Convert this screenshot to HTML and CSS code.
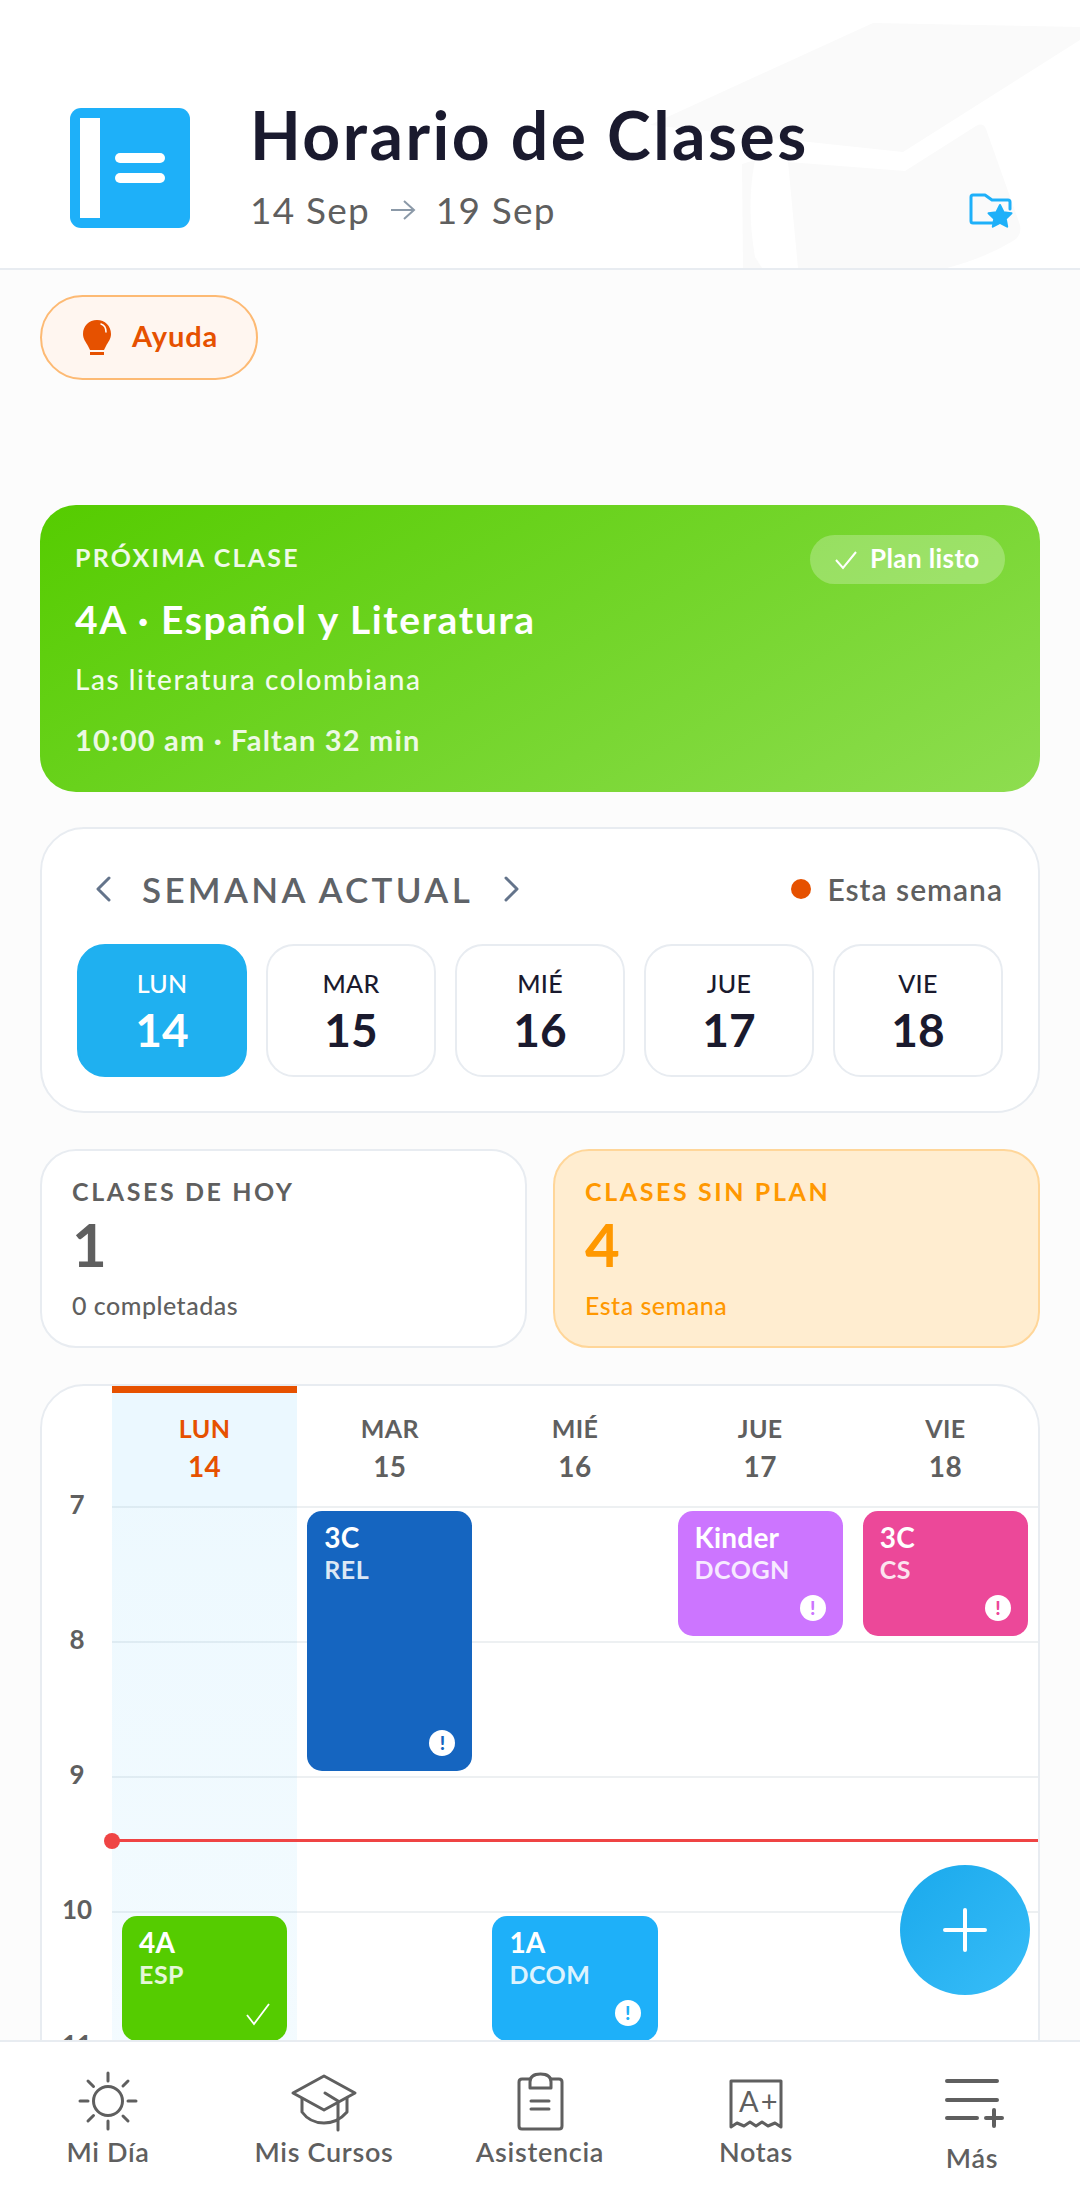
FILE: index.html
```html
<!DOCTYPE html>
<html lang="es">
<head>
<meta charset="utf-8">
<title>Horario de Clases</title>
<link rel="stylesheet" href="styles.css">
</head>
<body>
<div class="app">
  <header class="top">
    <svg class="top-art" viewBox="0 0 1080 268" aria-hidden="true">
      <path d="M650 125 L873 23 L1080 27 L1080 40 L903 152 Z"/>
      <path d="M788 162 L905 171 L976 126 Q983 122 986 129 L1020 225 Q1022 236 1013 241 Q985 258 947 268 L798 268 Z"/>
      <path d="M742 164 L755 160 Q746 205 755 257 L762 268 L743 268 Z"/>
    </svg>
    <svg class="logo" viewBox="0 0 120 120" aria-hidden="true">
      <rect width="120" height="120" rx="11" fill="#1eb0f9"/>
      <rect x="10" y="10" width="20" height="100" fill="#fff"/>
      <rect x="45" y="45" width="50" height="10" rx="5" fill="#fff"/>
      <rect x="45" y="65" width="50" height="10" rx="5" fill="#fff"/>
    </svg>
    <div class="top-text">
      <h1 class="title">Horario de Clases</h1>
      <div class="range">
        <span>14 Sep</span>
        <svg class="range-arrow" viewBox="0 0 28 24" aria-hidden="true"><path d="M2 12H25M15 3l10 9-10 9"/></svg>
        <span>19 Sep</span>
      </div>
    </div>
    <svg class="folder" viewBox="0 0 44 36" aria-hidden="true">
      <path class="folder-line" d="M24 30H4Q2 30 2 28V4Q2 2 4 2H16L23 7H39Q41 7 41 9V16"/>
      <path class="folder-star" d="M31 12l3.6 7.2 7.9 1.1-5.7 5.5 1.4 7.9-7.2-3.8-7.2 3.8 1.4-7.9-5.7-5.5 7.9-1.1z"/>
    </svg>
  </header>

  <main class="content">
    <button class="help">
      <svg class="help-icon" viewBox="0 0 28 36" aria-hidden="true">
        <path d="M14 0C6 0 0 6 0 14c0 5 3 8 5 12l2 4h14l2-4c2-4 5-7 5-12C28 6 22 0 14 0z" fill="#e65100"/>
        <path d="M18 4c3 1 5 4 5 8" fill="none" stroke="#fff" stroke-width="1.5" stroke-linecap="round"/>
        <rect x="7" y="32" width="14" height="3" fill="#e65100"/>
      </svg>
      <span>Ayuda</span>
    </button>

    <section class="next">
      <div class="next-head">
        <div class="next-kicker">PRÓXIMA CLASE</div>
        <div class="plan-chip">
          <svg class="plan-check" viewBox="0 0 24 20" aria-hidden="true"><path d="M2 10l7 8L22 2"/></svg>
          <span class="plan-text">Plan listo</span>
        </div>
      </div>
      <div class="next-name">4A · Español y Literatura</div>
      <div class="next-topic">Las literatura colombiana</div>
      <div class="next-time">10:00 am · Faltan 32 min</div>
    </section>

    <section class="week">
      <div class="week-head">
        <svg class="chev" viewBox="0 0 18 26" aria-hidden="true"><path d="M15 2L4 13l11 11"/></svg>
        <div class="week-name">SEMANA ACTUAL</div>
        <svg class="chev" viewBox="0 0 18 26" aria-hidden="true"><path d="M3 2l11 11L3 24"/></svg>
        <div class="week-now"><i class="dot"></i>Esta semana</div>
      </div>
      <div class="days">
        <div class="day day-on"><span class="day-n">LUN</span><b class="day-d">14</b></div>
        <div class="day"><span class="day-n">MAR</span><b class="day-d">15</b></div>
        <div class="day"><span class="day-n">MIÉ</span><b class="day-d">16</b></div>
        <div class="day"><span class="day-n">JUE</span><b class="day-d">17</b></div>
        <div class="day"><span class="day-n">VIE</span><b class="day-d">18</b></div>
      </div>
    </section>

    <section class="stats">
      <div class="stat">
        <div class="stat-k">CLASES DE HOY</div>
        <div class="stat-v">1</div>
        <div class="stat-s">0 completadas</div>
      </div>
      <div class="stat stat-warn">
        <div class="stat-k">CLASES SIN PLAN</div>
        <div class="stat-v">4</div>
        <div class="stat-s">Esta semana</div>
      </div>
    </section>

    <section class="cal">
      <div class="cal-head">
        <div class="cal-gut"></div>
        <div class="cal-day cal-today"><span>LUN</span><span class="cal-num">14</span></div>
        <div class="cal-day"><span>MAR</span><span class="cal-num">15</span></div>
        <div class="cal-day"><span>MIÉ</span><span class="cal-num">16</span></div>
        <div class="cal-day"><span>JUE</span><span class="cal-num">17</span></div>
        <div class="cal-day"><span>VIE</span><span class="cal-num">18</span></div>
      </div>
      <div class="cal-body">
        <div class="hours">
          <div class="hour">7</div>
          <div class="hour">8</div>
          <div class="hour">9</div>
          <div class="hour">10</div>
          <div class="hour">11</div>
        </div>
        <div class="grid">
          <div class="col col-today">
            <div class="ev ev-green" style="top:410px;height:125px"><b>4A</b><span>ESP</span>
              <svg class="ev-ok" viewBox="0 0 26 24" aria-hidden="true"><path d="M2 13l7 9L24 2"/></svg>
            </div>
          </div>
          <div class="col">
            <div class="ev ev-navy" style="top:5px;height:260px"><b>3C</b><span>REL</span><i class="ev-alert">!</i></div>
          </div>
          <div class="col">
            <div class="ev ev-sky" style="top:410px;height:125px"><b>1A</b><span>DCOM</span><i class="ev-alert">!</i></div>
          </div>
          <div class="col">
            <div class="ev ev-purple" style="top:5px;height:125px"><b>Kinder</b><span>DCOGN</span><i class="ev-alert">!</i></div>
          </div>
          <div class="col">
            <div class="ev ev-pink" style="top:5px;height:125px"><b>3C</b><span>CS</span><i class="ev-alert">!</i></div>
          </div>
          <div class="now"></div>
        </div>
      </div>
    </section>
  </main>

  <button class="fab" aria-label="Agregar">
    <svg viewBox="0 0 44 44" aria-hidden="true"><path d="M22 2V42M2 22H42"/></svg>
  </button>

  <nav class="nav">
    <div class="nav-item">
      <svg class="nav-icon" viewBox="0 0 70 70" aria-hidden="true">
        <circle cx="35" cy="35" r="14.5"/>
        <path d="M35 7v8M35 55v8M7 35h8M55 35h8M15 15l5.500 5.500M50 50l5 5M15 55l5.500-5.500M50 20l5-5"/>
      </svg>
      <span>Mi Día</span>
    </div>
    <div class="nav-item">
      <svg class="nav-icon" viewBox="0 0 70 70" aria-hidden="true">
        <path d="M35 10L66 27 35 44 4 27Z"/>
        <path d="M13 33V46C18 53 26 57 35 57S52 53 58 46V32"/>
        <path d="M36 27L49 35V64"/>
      </svg>
      <span>Mis Cursos</span>
    </div>
    <div class="nav-item">
      <svg class="nav-icon" viewBox="0 0 70 70" aria-hidden="true">
        <path d="M25 13H17Q14 13 14 16V60Q14 63 17 63H54Q57 63 57 60V16Q57 13 54 13H46"/>
        <path d="M25 22V16Q25 8 35.500 8T46 16V22Z"/>
        <path d="M26 35H44M26 43H44"/>
      </svg>
      <span>Asistencia</span>
    </div>
    <div class="nav-item">
      <svg class="nav-icon" viewBox="0 0 70 70" aria-hidden="true">
        <path d="M10 61V15H60V61L54 57 47 60 41 56 35 60 29 56 23 60 16 57Z"/>
        <text class="nav-grade" x="18" y="46">A+</text>
      </svg>
      <span>Notas</span>
    </div>
    <div class="nav-item nav-more">
      <svg class="nav-icon" viewBox="0 0 70 70" aria-hidden="true">
        <path d="M10 15H60M10 34H60M10 52H40M57 44V60M49 52H65"/>
      </svg>
      <span>Más</span>
    </div>
  </nav>
</div>
</body>
</html>
```

FILE: styles.css
```css
* { box-sizing: border-box; }
html, body { margin: 0; padding: 0; }
body { font-family: "Lato", "Noto Sans", sans-serif; color: #1a1a2e; background: #fcfcfc; }
.app { position: relative; width: 1080px; height: 2211px; display: flex; flex-direction: column; overflow: hidden; }

/* Header */
.top { position: relative; flex: none; height: 270px; background: #fff; border-bottom: 2px solid #e8ecf1; display: flex; padding: 108px 67px 0 70px; }
.top-art { position: absolute; left: 0; top: 0; width: 1080px; height: 268px; }
.top-art path { fill: #fafafa; }
.logo { position: relative; flex: none; width: 120px; height: 120px; margin-right: 60px; }
.top-text { position: relative; flex: 1; }
.title { margin: 0; font-size: 66px; line-height: 66px; font-weight: 700; letter-spacing: 2.5px; color: #1a1a2e; position: relative; top: -6px; }
.range { display: flex; align-items: center; gap: 19px; margin-top: 14px; font-size: 37px; line-height: 44px; color: #5f5f5f; letter-spacing: 1.2px; }
.range-arrow { width: 28px; height: 24px; fill: none; stroke: #8b99a8; stroke-width: 2; }
.folder { position: relative; flex: none; width: 44px; height: 36px; margin-top: 85px; }
.folder-line { fill: none; stroke: #1eb0f9; stroke-width: 3; stroke-linecap: round; stroke-linejoin: round; }
.folder-star { fill: #1eb0f9; stroke: #1eb0f9; stroke-width: 2; stroke-linejoin: round; }

/* Content */
.content { flex: 1; min-height: 0; overflow: hidden; padding: 25px 40px 0; display: flex; flex-direction: column; }
.help { flex: none; align-self: flex-start; width: 218px; height: 85px; border-radius: 43px; border: 2px solid #fdba74; background: #fff6f0; display: flex; align-items: center; padding: 0 0 4px 41px; gap: 21px; font: 700 29px "Lato", sans-serif; letter-spacing: 0.9px; color: #e65100; }
.help-icon { width: 28px; height: 36px; flex: none; margin-top: 4px; }

.next { flex: none; margin-top: 125px; height: 287px; border-radius: 36px; padding: 30px 35px 0; color: #fff; background: linear-gradient(150deg, #55cc00 0%, #8edd50 100%); }
.next-head { display: flex; justify-content: space-between; align-items: flex-start; }
.next-kicker { font-size: 25px; line-height: 30px; font-weight: 700; letter-spacing: 2.2px; margin-top: 7px; opacity: .9; }
.plan-chip { width: 195px; height: 49px; border-radius: 25px; background: rgba(255,255,255,.25); display: flex; align-items: center; padding-left: 24px; gap: 12px; font-size: 26px; font-weight: 700; letter-spacing: 0.4px; }
.plan-text { position: relative; top: -2px; }
.plan-check { width: 24px; height: 20px; fill: none; stroke: #fff; stroke-width: 2; }
.next-name { font-size: 39px; line-height: 48px; font-weight: 700; letter-spacing: 1.6px; margin-top: 11px; }
.next-topic { font-size: 28px; line-height: 34px; font-weight: 500; margin-top: 19px; letter-spacing: 1.55px; opacity: .92; }
.next-time { font-size: 29px; line-height: 34px; font-weight: 700; margin-top: 27px; letter-spacing: 1.2px; opacity: .88; }

.week { flex: none; margin-top: 35px; height: 286px; background: #fff; border: 2px solid #e8ecf1; border-radius: 44px; padding: 0 35px; }
.week-head { display: flex; align-items: center; height: 115px; padding-top: 4px; }
.chev { width: 18px; height: 26px; fill: none; stroke: #64748b; stroke-width: 3; stroke-linecap: round; stroke-linejoin: round; margin-left: 17px; }
.week-name { font-size: 35px; font-weight: 600; letter-spacing: 3.3px; color: #5f6368; margin: 0 30px 0 30px; }
.week-name + .chev { margin-left: 0; }
.week-now { margin-left: auto; display: flex; align-items: center; gap: 16px; font-size: 30px; font-weight: 600; color: #5f5f5f; letter-spacing: 1px; }
.dot { width: 20px; height: 20px; border-radius: 50%; background: #e65100; }
.days { display: grid; grid-template-columns: repeat(5, 170px); justify-content: space-between; }
.day { height: 133px; border: 2px solid #e8ecf1; border-radius: 28px; background: #fff; display: flex; flex-direction: column; align-items: center; padding-top: 21px; color: #1a1a2e; }
.day-on { background: #1fb0f0; border-color: #1fb0f0; color: #fff; }
.day-n { font-size: 25px; line-height: 32px; font-weight: 500; letter-spacing: 0.3px; }
.day-d { font-size: 46px; line-height: 56px; font-weight: 700; margin-top: 3px; }

.stats { flex: none; margin-top: 36px; display: grid; grid-template-columns: 487px 487px; column-gap: 26px; }
.stat { height: 199px; background: #fff; border: 2px solid #e8ecf1; border-radius: 36px; padding: 25px 30px 0; color: #5f5f5f; }
.stat-warn { background: #ffedd0; border-color: #ffd699; color: #ff9800; }
.stat-k { font-size: 25px; line-height: 30px; font-weight: 700; letter-spacing: 2.6px; }
.stat-v { font-size: 60px; line-height: 66px; font-weight: 700; margin-top: 5px; }
.stat-s { font-size: 25px; line-height: 30px; font-weight: 500; margin-top: 13px; letter-spacing: 0.5px; }

/* Calendar */
.cal { flex: none; margin-top: 36px; height: 1000px; background: #fff; border: 2px solid #e8ecf1; border-radius: 44px 44px 0 0; overflow: hidden; }
.cal-head { display: grid; grid-template-columns: 70px repeat(5, 1fr); height: 120px; }
.cal-day { display: flex; flex-direction: column; align-items: center; padding-top: 27px; font-size: 25px; line-height: 30px; font-weight: 700; color: #5f5f5f; gap: 8px; letter-spacing: 0.4px; }
.cal-num { font-size: 28px; }
.cal-today { background: #ebf8ff; border-top: 7px solid #e65100; padding-top: 20px; color: #e65100; }
.cal-body { display: flex; }
.hours { flex: none; width: 70px; margin-top: -16px; }
.hour { height: 135px; font-size: 26px; line-height: 28px; font-weight: 700; color: #5f5f5f; text-align: center; }
.grid { position: relative; flex: 1; height: 810px; display: grid; grid-template-columns: repeat(5, 1fr); background: repeating-linear-gradient(to bottom, #edf0f2 0, #edf0f2 2px, transparent 2px, transparent 135px); }
.col { position: relative; }
.col-today { background: linear-gradient(to bottom, rgba(30,176,248,.08), rgba(30,176,248,.04)); }
.ev { position: absolute; left: 10px; right: 10px; border-radius: 15px; padding: 9px 17px; color: #fff; display: flex; flex-direction: column; }
.ev b { font-size: 28px; line-height: 34px; font-weight: 700; letter-spacing: 0.2px; }
.ev span { font-size: 25px; line-height: 30px; font-weight: 700; letter-spacing: 0.5px; opacity: .85; }
.ev-green { background: #55cc00; }
.ev-navy { background: #1565c0; }
.ev-sky { background: #1eb0f9; }
.ev-purple { background: #cc75ff; }
.ev-pink { background: #ec4899; }
.ev-alert { position: absolute; right: 17px; bottom: 15px; width: 26px; height: 26px; border-radius: 50%; background: #fff; font-style: normal; font-size: 19px; line-height: 26px; font-weight: 900; text-align: center; }
.ev-navy .ev-alert { color: #1565c0; }
.ev-sky .ev-alert { color: #1eb0f9; }
.ev-purple .ev-alert { color: #cc75ff; }
.ev-pink .ev-alert { color: #ec4899; }
.ev-ok { position: absolute; right: 16px; bottom: 15px; width: 26px; height: 24px; fill: none; stroke: #fff; stroke-width: 1.800; }
.now { position: absolute; left: 0; right: 0; top: 333px; height: 3px; background: #ef4444; }
.now::before { content: ""; position: absolute; left: -8px; top: -6.5px; width: 16px; height: 16px; border-radius: 50%; background: #ef4444; }

.fab { position: absolute; left: 900px; top: 1865px; width: 130px; height: 130px; padding: 43px; border: 0; border-radius: 50%; background: linear-gradient(135deg, #1aa9ec, #38bdf8); }
.fab svg { display: block; width: 44px; height: 44px; fill: none; stroke: #fff; stroke-width: 4; stroke-linecap: round; }

/* Bottom nav */
.nav { flex: none; position: relative; height: 171px; background: #fff; border-top: 2px solid #e8ecf1; display: grid; grid-template-columns: repeat(5, 1fr); }
.nav-item { display: flex; flex-direction: column; align-items: center; padding-top: 24px; font-size: 27px; line-height: 34px; font-weight: 600; color: #5f5f5f; letter-spacing: 0.7px; }
.nav-icon { width: 70px; height: 70px; flex: none; margin-bottom: -1px; fill: none; stroke: #5f5f5f; stroke-width: 3; stroke-linecap: round; stroke-linejoin: round; }
.nav-more { gap: 6px; }
.nav-more .nav-icon { stroke-width: 4; }
.nav-grade { font: 400 29px "Lato", sans-serif; letter-spacing: 2px; fill: #5f5f5f; stroke: none; }
```
